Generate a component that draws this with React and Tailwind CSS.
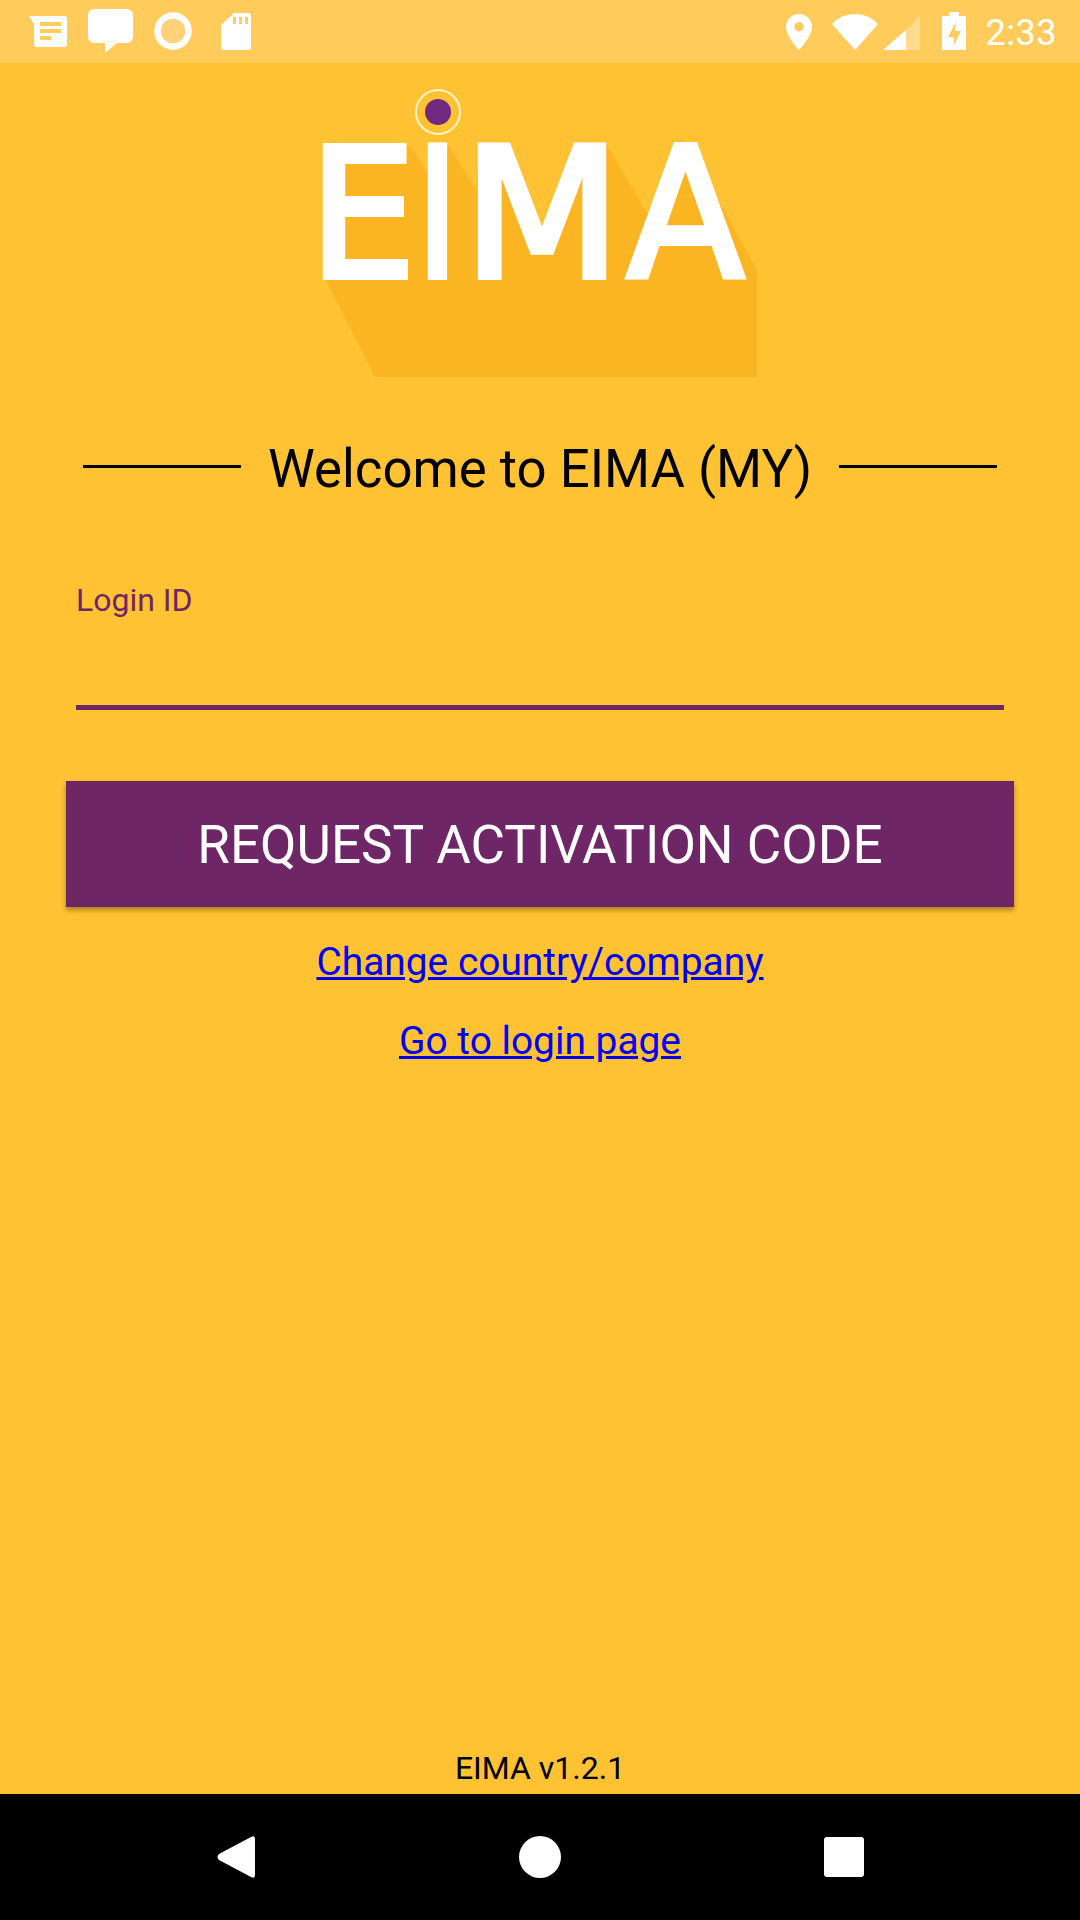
import React from 'react';

const StatusLeft = () => (
    <div className="flex items-center">
        <svg width="260" height="63" viewBox="0 0 260 63" fill="#fff">
            {/* notes */}
            <path d="M29 16h35a3 3 0 0 1 3 3v25a3 3 0 0 1-3 3H37a3 3 0 0 1-3-3V24z" />
            <g fill="#ffcc5c">
                <rect x="40" y="22" width="21" height="4" />
                <rect x="40" y="29" width="21" height="4" />
                <rect x="40" y="36" width="11" height="4" />
            </g>
            {/* chat */}
            <path d="M94 9h33a6 6 0 0 1 6 6v22a6 6 0 0 1-6 6h-10l-12 10v-10H94a6 6 0 0 1-6-6V15a6 6 0 0 1 6-6z" />
            {/* ring */}
            <circle cx="173" cy="31" r="15.500" fill="#ffd27a" stroke="#fff" strokeWidth="6.500" />
            {/* sd card */}
            <path d="M234 13h14a3 3 0 0 1 3 3v31a3 3 0 0 1-3 3h-24a3 3 0 0 1-3-3V25z" />
            <g fill="#ffcc5c">
                <rect x="233" y="17" width="3" height="7" />
                <rect x="239" y="17" width="3" height="7" />
                <rect x="245" y="17" width="3" height="7" />
            </g>
        </svg>
    </div>
);

const StatusRight = () => (
    <div className="flex items-center">
        <svg width="200" height="63" viewBox="780 0 200 63" fill="#fff">
            {/* location */}
            <path fillRule="evenodd" d="M800 14c-7.200 0-13 5.800-13 13 0 9.500 13 23 13 23s13-13.500 13-23c0-7.200-5.800-13-13-13zm0 17.500a4.700 4.700 0 1 1 0-9.400 4.700 4.700 0 0 1 0 9.400z" />
            {/* wifi */}
            <path d="M833 24c6-6.500 14.500-10 23-10s17 3.500 23 10l-23 26z" />
            {/* signal */}
            <path d="M921 16v34h-14V30z" fill="#fff" fillOpacity="0.3" />
            <path d="M907 30v20h-23z" />
            {/* battery */}
            <path fillRule="evenodd" d="M950 12h10v4h7v34h-24V16h7zm7 10-8 15h6v8l7-14h-6l1-9z" />
        </svg>
        <span className="font-['Roboto',sans-serif] text-[36px] leading-none font-normal text-white ml-[7px] mt-[2px] tracking-[0.5px]">2:33</span>
    </div>
);

const Logo = () => (
    <svg viewBox="290 85 500 295" className="w-[500px] h-[295px] shrink-0">
        <polygon fill="#fbb522" points="326,280 375,377 757,377 757,270 686,142 647,213 605,142 542,225 479,142 477,192 449,146 430,178 410,146 326,146" />
        <circle cx="438" cy="112" r="22" fill="none" stroke="#fff3c9" strokeWidth="2" />
        <circle cx="438" cy="112" r="13" fill="#6f2a80" />
        <g fill="#fff" stroke="#fff" strokeWidth="6" strokeLinejoin="miter" fontFamily="'DejaVu Sans', sans-serif" fontSize="180">
            <text x="309" y="277" textLength="107" lengthAdjust="spacingAndGlyphs">E</text>
            <text x="416" y="277" textLength="43" lengthAdjust="spacingAndGlyphs">I</text>
            <text x="463" y="277" textLength="158" lengthAdjust="spacingAndGlyphs">M</text>
            <text x="627" y="277" textLength="117" lengthAdjust="spacingAndGlyphs">A</text>
        </g>
    </svg>
);

const App = () => {
    return (
        <div className="w-[1080px] h-[1920px] bg-[#ffc233] flex flex-col font-['Roboto',sans-serif] overflow-hidden">
            {/* Status bar */}
            <div className="h-[63px] bg-[#ffcc5c] flex items-center justify-between pr-[23px] shrink-0">
                <StatusLeft />
                <StatusRight />
            </div>

            <div className="flex-1 flex flex-col items-center">
                <div className="mt-[22px]">
                    <Logo />
                </div>

                {/* Heading */}
                <div className="mt-[51px] h-[70px] flex items-center justify-center">
                    <div className="w-[158px] h-[3px] bg-black"></div>
                    <h1 className="mx-[27px] text-[52.750px] leading-none font-normal text-black mt-[7px]">Welcome to EIMA (MY)</h1>
                    <div className="w-[158px] h-[3px] bg-black"></div>
                </div>

                {/* Login field */}
                <div className="w-[928px] mt-[81px]">
                    <label className="block text-[32px] leading-[36px] text-[#6f2667]">Login ID</label>
                    <div className="h-[5px] bg-[#6f2667] mt-[87px]"></div>
                </div>

                <button className="w-[948px] h-[126px] mt-[71px] pt-[4px] bg-[#6f2667] text-white text-[53px] shadow-[0_3px_5px_rgba(0,0,0,0.35)]">
                    REQUEST ACTIVATION CODE
                </button>

                <a href="#" className="mt-[33px] text-[38.900px] leading-[44px] text-[#0000ee] underline">Change country/company</a>
                <a href="#" className="mt-[35px] text-[38.900px] leading-[44px] text-[#0000ee] underline">Go to login page</a>

                <div className="mt-auto mb-[8px] text-[32px] leading-[36px] text-black">EIMA v1.2.1</div>
            </div>

            {/* Nav bar */}
            <div className="h-[126px] bg-black shrink-0 flex items-center justify-center">
                <svg width="1080" height="126" viewBox="0 1794 1080 126" fill="#fff">
                    <path d="M255 1839v36q0 4-4 2l-32-17q-3-3 0-6l32-17q4-2 4 2z" />
                    <circle cx="540" cy="1857" r="21" />
                    <rect x="824" y="1837" width="40" height="40" rx="3" />
                </svg>
            </div>
        </div>
    );
};

export default App;
